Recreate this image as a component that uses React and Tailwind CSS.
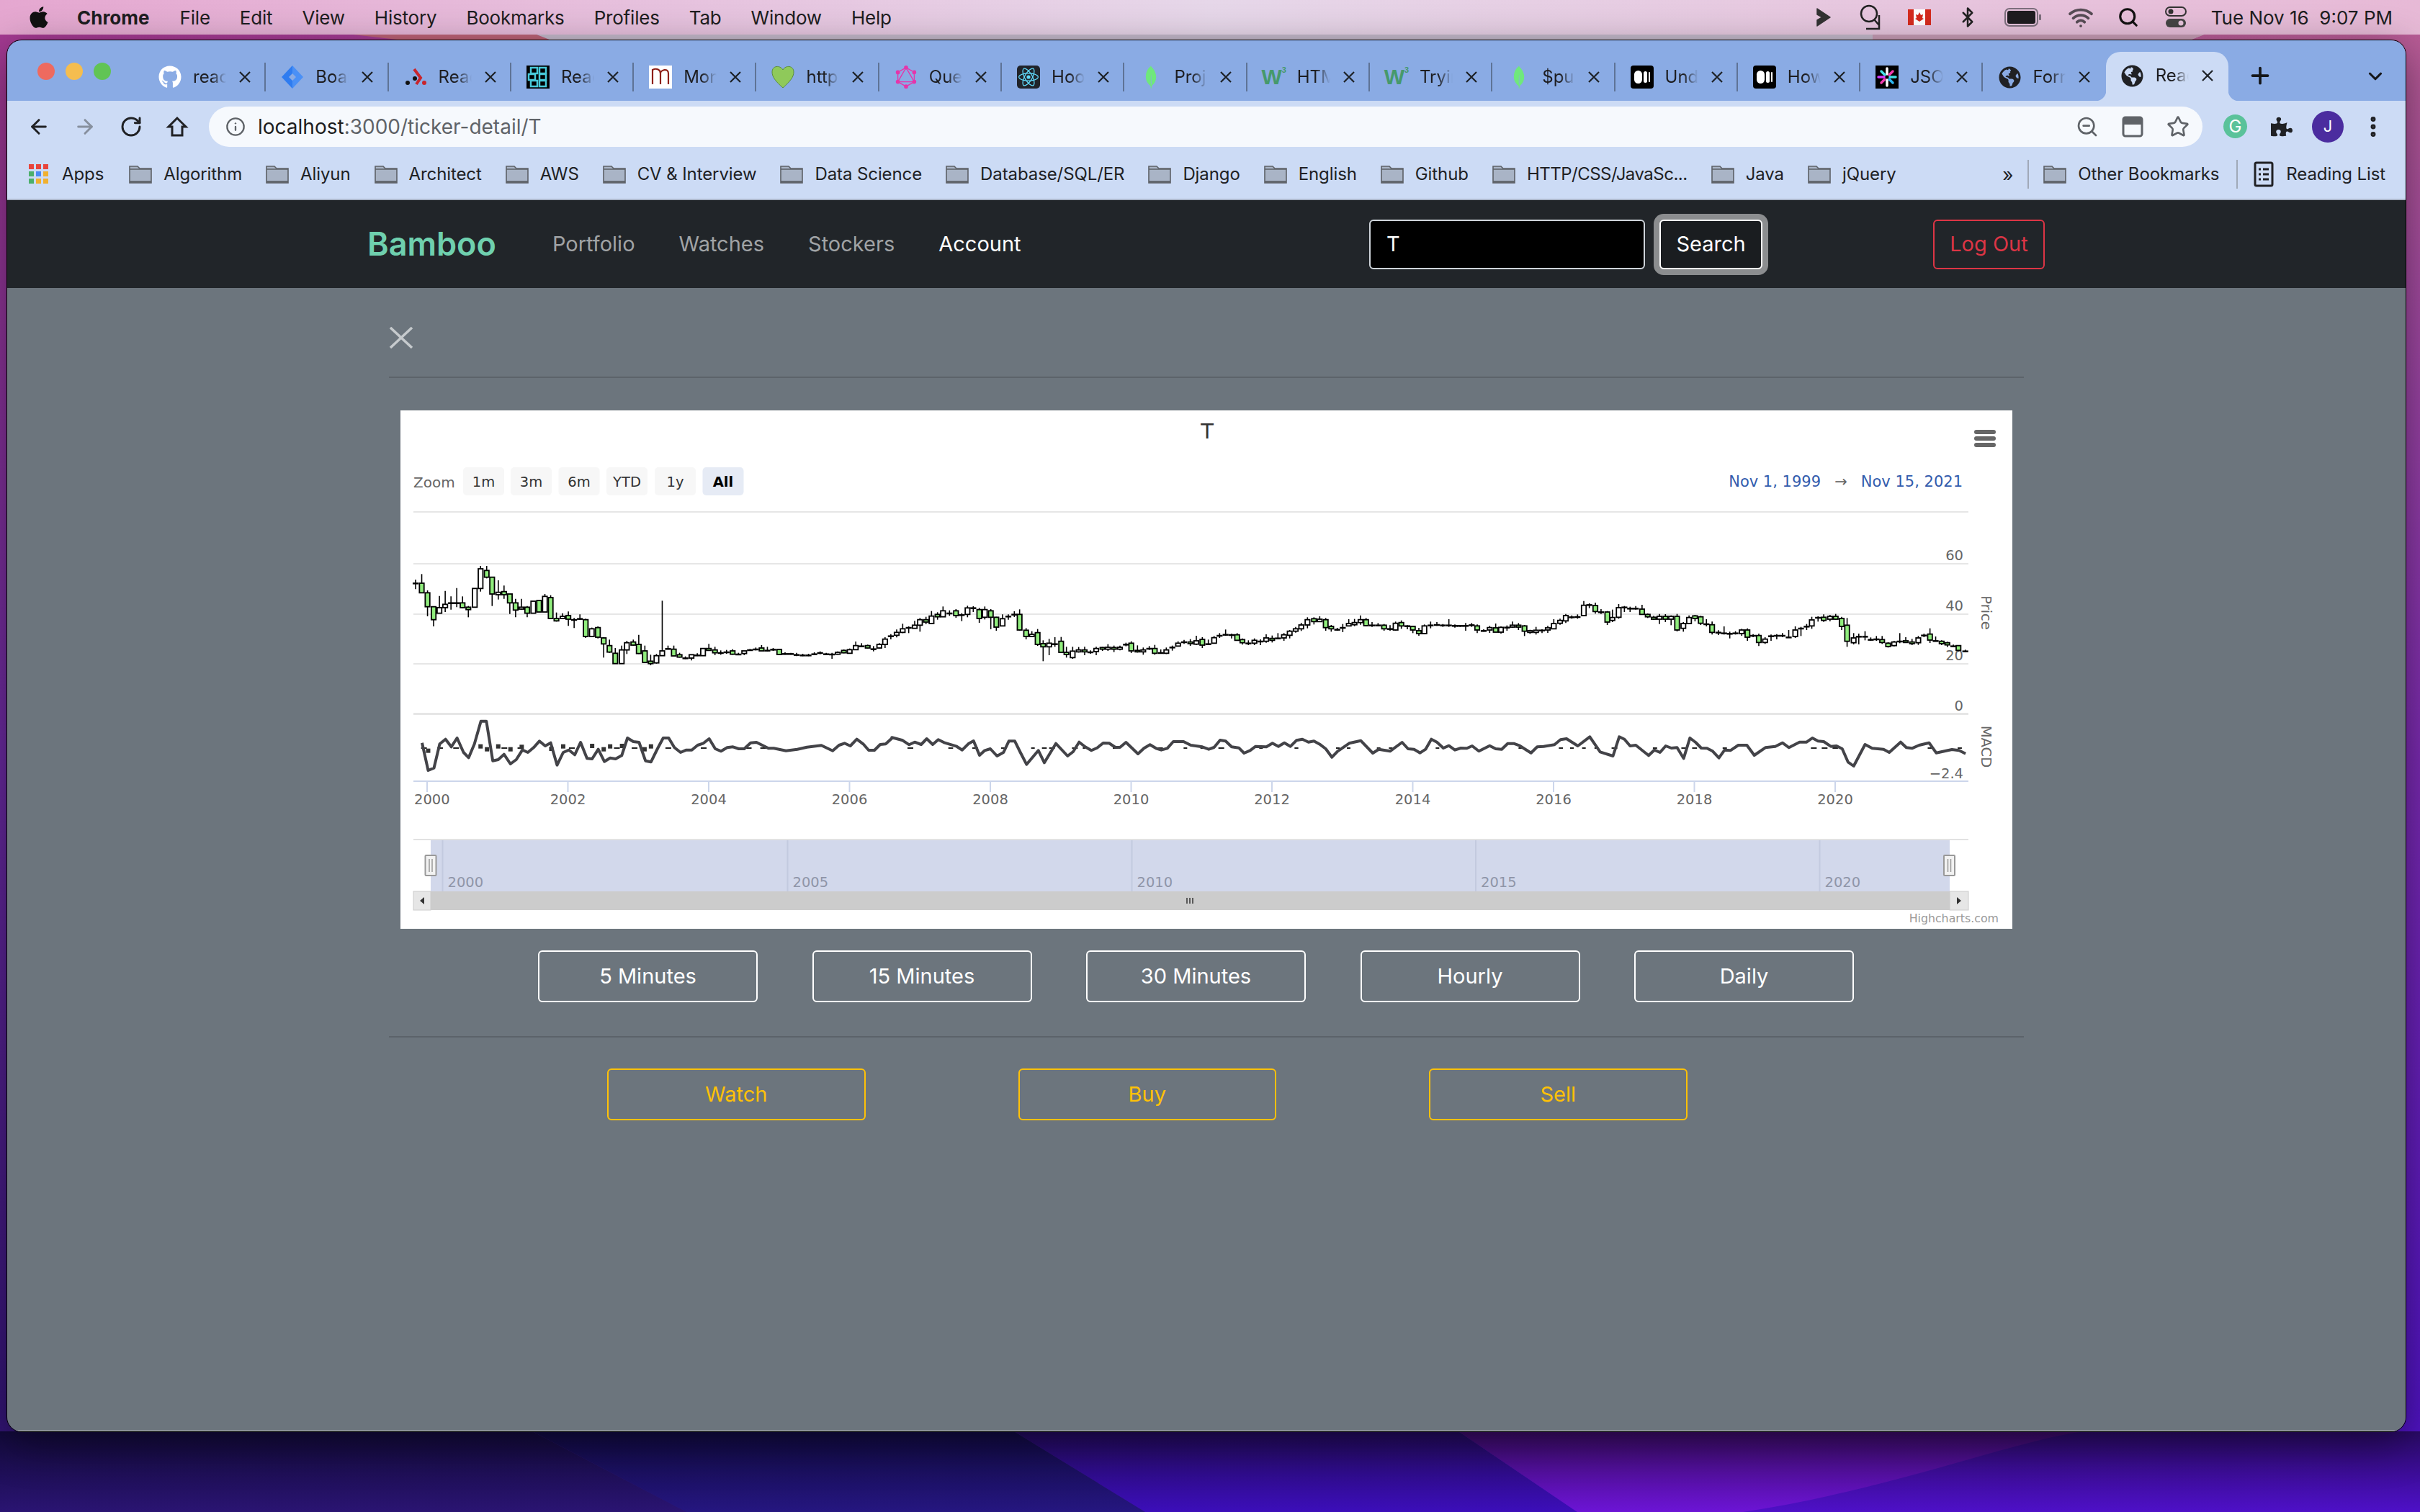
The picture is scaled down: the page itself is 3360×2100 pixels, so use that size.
import { ArrowLeft, ArrowRight, Bluetooth, EllipsisVertical, Info, Plus, RotateCw, Search, Star, Wifi, ZoomOut, ChevronDown } from 'lucide-react'
import { FaApple, FaGithub, FaGlobeAmericas, FaPuzzlePiece } from 'react-icons/fa'
import { SiGraphql, SiMongodb, SiReact } from 'react-icons/si'

const menus = ['File', 'Edit', 'View', 'History', 'Bookmarks', 'Profiles', 'Tab', 'Window', 'Help']

const W3 = () => (
  <span className="flex w-[32px] items-start justify-center font-['Liberation_Sans',sans-serif] text-[30px] leading-none font-bold text-[#46996c]">
    W<span className="text-[11px] leading-none">3</span>
  </span>
)

const Medium = () => (
  <span className="flex h-[32px] w-[32px] items-center justify-center gap-[2px] rounded-[4px] bg-black">
    <span className="h-[18px] w-[11px] rounded-full bg-white" />
    <span className="h-[16px] w-[5px] rounded-full bg-white" />
    <span className="h-[14px] w-[2px] rounded-full bg-white" />
  </span>
)

const Leaf = () => <SiMongodb size={32} color="#6fe87c" />
const Globe = () => <FaGlobeAmericas size={31} color="#202124" />

const tabs = [
  { title: 'react', icon: <FaGithub size={32} color="#fff" /> },
  {
    title: 'Board',
    icon: (
      <svg width="32" height="32" viewBox="0 0 32 32">
        <path d="M16 0L1 16l15 16V21l-5-5 5-5z" fill="#2f7cf0" />
        <path d="M16 0l15 16-15 16V21l5-5-5-5z" fill="#4a90f6" />
      </svg>
    ),
  },
  {
    title: 'React',
    icon: (
      <svg width="32" height="32" viewBox="0 0 32 32">
        <circle cx="5" cy="24" r="3" fill="#111" />
        <circle cx="15" cy="18" r="3" fill="#111" />
        <circle cx="28" cy="24" r="3" fill="#c9252c" />
        <path d="M14 5l9 12-6 9" fill="none" stroke="#c9252c" strokeWidth="4" />
      </svg>
    ),
  },
  {
    title: 'React',
    icon: (
      <svg width="32" height="32" viewBox="0 0 32 32">
        <rect width="32" height="32" fill="#000" />
        <g fill="none" stroke="#47c8d8" strokeWidth="2.5">
          <rect x="6" y="3" width="9" height="8" />
          <rect x="18" y="3" width="9" height="8" />
          <rect x="3" y="12" width="9" height="8" />
          <rect x="18" y="12" width="9" height="8" />
          <rect x="6" y="21" width="9" height="8" />
          <rect x="18" y="21" width="9" height="8" />
        </g>
      </svg>
    ),
  },
  {
    title: 'Mongo',
    icon: (
      <svg width="32" height="32" viewBox="0 0 32 32">
        <rect width="32" height="32" fill="#fff" />
        <path d="M5 26V6c6-3 11 0 11 5v15M16 11c0-5 11-8 11 0v15" fill="none" stroke="#8e1f17" strokeWidth="2.2" />
      </svg>
    ),
  },
  {
    title: 'https',
    icon: (
      <svg width="32" height="32" viewBox="0 0 32 32">
        <path d="M16 31C6 22 1 16 1 9c0-9 11-10 15-3 4-7 15-6 15 3 0 7-5 13-15 22z" fill="#8fc95a" stroke="#5c8f3a" />
      </svg>
    ),
  },
  { title: 'Query', icon: <SiGraphql size={32} color="#e535ab" /> },
  {
    title: 'Hooks',
    icon: (
      <span className="flex h-[32px] w-[32px] items-center justify-center rounded-[5px] bg-[#20232a]">
        <SiReact size={28} color="#61dafb" />
      </span>
    ),
  },
  { title: 'Project', icon: <Leaf /> },
  { title: 'HTML', icon: <W3 /> },
  { title: 'Trying', icon: <W3 /> },
  { title: '$push', icon: <Leaf /> },
  { title: 'Under', icon: <Medium /> },
  { title: 'How', icon: <Medium /> },
  {
    title: 'JSON',
    icon: (
      <svg width="32" height="32" viewBox="0 0 32 32">
        <rect width="32" height="32" fill="#000" />
        <g strokeWidth="3.5" strokeLinecap="round">
          <path d="M16 4v8" stroke="#fff" />
          <path d="M16 20v8" stroke="#fff" />
          <path d="M8 8l5 5" stroke="#42e0e6" />
          <path d="M24 8l-5 5" stroke="#f23bb0" />
          <path d="M4 16h8" stroke="#d63aff" />
          <path d="M20 16h8" stroke="#42e0e6" />
          <path d="M8 24l5-5" stroke="#f23bb0" />
          <path d="M24 24l-5-5" stroke="#2fb6f0" />
        </g>
      </svg>
    ),
  },
  { title: 'Forms', icon: <Globe /> },
]

const bookmarks = ['Algorithm', 'Aliyun', 'Architect', 'AWS', 'CV & Interview', 'Data Science', 'Database/SQL/ER', 'Django', 'English', 'Github', 'HTTP/CSS/JavaSc...', 'Java', 'jQuery']

const TabClose = () => (
  <svg width="18" height="18" viewBox="0 0 18 18" className="shrink-0">
    <path d="M2 2l14 14M16 2L2 16" stroke="#1d2126" strokeWidth="2.2" fill="none" />
  </svg>
)

const Folder = () => (
  <svg width="32" height="26" viewBox="0 0 32 26" className="shrink-0">
    <path d="M1 25V2h11l3 3h16v20z" fill="#a9b4c6" stroke="#5c6066" strokeWidth="1.6" />
    <path d="M1 6h30" stroke="#5c6066" strokeWidth="1.6" />
    <path d="M1 23.5h30" stroke="#5c6066" strokeWidth="2.4" />
  </svg>
)

const AppsGrid = () => (
  <svg width="28" height="28" viewBox="0 0 28 28" className="shrink-0">
    {[
      [0, 0, '#e8453c'], [10, 0, '#e8453c'], [20, 0, '#e8453c'],
      [0, 10, '#4caf6a'], [10, 10, '#4a8af4'], [20, 10, '#f0b02f'],
      [0, 20, '#4caf6a'], [10, 20, '#f0b02f'], [20, 20, '#f0b02f'],
    ].map(([x, y, c]) => (
      <rect key={x + '-' + y} x={x} y={y} width="7" height="7" fill={c} />
    ))}
  </svg>
)

// candle rows: [x, top, bottom, green, wickTop, wickBottom], read off the zoomed crops
const rowsA = [
  [83, 750, 752, 0, 735, 775], [102, 750, 790, 1, 712, 790], [120, 790, 848, 1, 780, 888], [139, 848, 902, 1, 848, 930],
  [157, 852, 875, 0, 803, 875], [175, 838, 852, 0, 782, 870], [193, 832, 834, 0, 805, 860], [211, 832, 834, 0, 770, 850],
  [229, 832, 852, 1, 805, 855], [247, 850, 860, 1, 845, 892], [267, 772, 850, 0, 772, 852], [285, 690, 772, 0, 678, 785],
  [304, 697, 725, 1, 678, 730], [321, 725, 795, 1, 725, 845], [340, 788, 798, 0, 738, 818], [358, 785, 798, 1, 760, 815],
  [376, 795, 832, 1, 795, 878], [394, 832, 862, 1, 815, 892], [412, 850, 858, 0, 815, 860], [430, 850, 875, 1, 845, 892],
  [449, 825, 875, 0, 825, 875], [467, 822, 870, 1, 822, 870], [485, 805, 870, 0, 795, 870], [503, 810, 897, 1, 800, 897],
  [521, 897, 907, 1, 872, 910], [540, 888, 897, 0, 875, 900], [558, 885, 900, 1, 868, 928], [576, 902, 904, 0, 895, 937],
  [594, 898, 900, 0, 880, 902], [612, 902, 972, 1, 898, 978], [631, 940, 972, 0, 935, 975], [650, 935, 975, 1, 930, 980],
  [668, 978, 1003, 1, 975, 1060], [686, 1010, 1037, 1, 985, 1040], [704, 1042, 1085, 1, 1020, 1085], [724, 1028, 1085, 0, 1010, 1085],
  [740, 998, 1028, 0, 990, 1045], [760, 995, 1008, 1, 985, 1010], [777, 1005, 1043, 1, 965, 1045], [796, 1032, 1080, 1, 1010, 1080],
  [814, 1075, 1085, 1, 1048, 1092], [832, 1052, 1082, 0, 1045, 1085], [850, 1032, 1052, 0, 823, 1052], [868, 1023, 1025, 0, 1010, 1025],
  [886, 1025, 1053, 1, 1010, 1053], [904, 1048, 1058, 1, 1040, 1060], [922, 1062, 1064, 0, 1055, 1066], [941, 1048, 1062, 0, 1048, 1072],
  [959, 1050, 1052, 0, 1042, 1054], [977, 1022, 1052, 0, 1022, 1052], [995, 1022, 1030, 1, 1003, 1030], [1014, 1028, 1040, 1, 1015, 1050],
  [1032, 1040, 1042, 0, 1030, 1048], [1050, 1037, 1039, 0, 1028, 1044], [1069, 1032, 1046, 1, 1025, 1048], [1087, 1046, 1048, 0, 1040, 1050],
  [1105, 1032, 1043, 0, 1032, 1050], [1123, 1028, 1030, 0, 1024, 1032], [1141, 1025, 1027, 0, 1018, 1030], [1159, 1020, 1032, 1, 1008, 1032],
  [1177, 1030, 1032, 0, 1015, 1034], [1195, 1026, 1028, 0, 1020, 1032], [1214, 1026, 1047, 1, 1024, 1047], [1232, 1044, 1046, 0, 1038, 1048],
  [1250, 1044, 1046, 0, 1040, 1048], [1268, 1048, 1050, 0, 1040, 1054], [1287, 1050, 1052, 0, 1044, 1054], [1305, 1050, 1052, 0, 1044, 1054],
  [1323, 1045, 1047, 0, 1038, 1050], [1341, 1040, 1042, 0, 1034, 1046], [1360, 1045, 1047, 0, 1040, 1050], [1378, 1046, 1048, 0, 1040, 1065],
  [1396, 1038, 1046, 0, 1034, 1048], [1415, 1030, 1040, 1, 1026, 1042], [1433, 1027, 1042, 0, 1022, 1042], [1452, 1010, 1027, 0, 993, 1027],
  [1470, 1012, 1014, 0, 1000, 1016], [1489, 1010, 1020, 1, 1006, 1022], [1507, 1024, 1026, 0, 1012, 1034], [1525, 1005, 1020, 0, 1000, 1022],
  [1543, 983, 1005, 0, 975, 1020], [1561, 970, 972, 0, 962, 984],
]

const rowsB = [
  [45, 235, 247], [70, 220, 235], [95, 215, 217, 0, 210, 238], [120, 205, 218], [142, 182, 205, 0, 175, 232], [167, 182, 192, 1], [190, 167, 198],
  [215, 160, 170, 1], [238, 145, 170], [265, 155, 157, 0, 143, 166], [292, 145, 165, 1, 138], [316, 162, 164, 0, 155, 188], [340, 133, 160],
  [364, 133, 135, 0, 126, 150], [389, 140, 177, 1, 133, 195], [412, 140, 172, 0, 127], [437, 145, 172, 1, 138, 222], [460, 172, 213, 1, 170, 228],
  [486, 178, 208], [510, 168, 170, 0, 160, 182], [535, 160, 162, 0, 147], [557, 160, 225, 1], [584, 226, 252, 1], [608, 243, 252, 0, 230], [632, 236, 285, 1],
  [655, 282, 295, 1, 268, 355], [680, 280, 295, 0, 262, 330], [704, 283, 285, 0, 255, 295], [730, 272, 318, 1], [752, 318, 327, 1, 295, 340],
  [778, 313, 340, 0, 295, 345], [803, 308, 316, 0, 296], [828, 308, 316, 1, 295, 330], [852, 317, 319, 0, 310, 324], [876, 302, 315, 0, 295, 330],
  [902, 298, 305, 1, 296, 312], [925, 297, 305, 0, 284, 312], [950, 298, 305, 1, 290], [975, 297, 305, 0, 290, 310], [1000, 285, 287, 0, 278],
  [1022, 280, 312, 1, 272], [1048, 310, 316, 1], [1072, 308, 316, 0, 298], [1097, 302, 304, 0, 292, 308], [1120, 302, 322, 1], [1145, 320, 322, 0, 306, 324],
  [1168, 308, 322, 0, 298], [1193, 297, 299, 0, 290], [1217, 280, 292, 0, 272], [1242, 275, 277, 0, 266], [1268, 275, 282, 1], [1293, 270, 284], [1318, 264, 288, 1],
  [1343, 283, 285], [1367, 257, 280, 0, 250, 282], [1390, 248, 250, 0, 238, 258], [1415, 244, 246], [1440, 245, 247, 0, 240, 260], [1463, 245, 268, 1, 238],
]

const rowsC = [
  [15, 265, 278, 1, 260, 286], [40, 280, 282, 0, 268, 288], [65, 268, 280, 0, 260, 288], [90, 272, 274, 0, 264, 288], [114, 258, 272], [139, 260, 268, 1],
  [163, 259, 261], [188, 245, 258, 0, 238], [212, 230, 247, 0, 225, 260], [237, 220, 230, 0, 212], [260, 204, 220, 0, 195], [286, 182, 204, 0, 172, 218],
  [313, 178, 190, 1, 172], [337, 180, 190, 0, 168], [362, 182, 215, 1, 175, 228], [385, 210, 220, 1, 204, 232], [410, 223, 225, 0, 216, 228], [433, 215, 217, 0, 200, 234],
  [458, 198, 208], [482, 194, 203], [507, 182, 194, 0, 164], [530, 182, 207, 1, 175], [555, 205, 207, 0, 192, 212], [580, 205, 207, 0, 196, 210],
  [605, 205, 220, 1, 200, 228], [630, 220, 222, 0, 205, 228], [653, 197, 225, 0, 190], [677, 194, 208, 1], [702, 208, 210, 0, 205, 222], [725, 210, 225, 1, 208, 238],
  [750, 228, 240, 1], [773, 208, 240, 0, 202], [799, 205, 207, 0, 190, 218], [825, 203, 205, 0, 192, 208], [850, 205, 207, 0, 200, 212], [875, 205, 207, 0, 180, 212],
  [900, 207, 209, 0, 202, 215], [922, 207, 209, 0, 204, 212], [945, 207, 209, 0, 196, 228], [970, 204, 206, 0, 196, 212], [993, 208, 225, 1, 202, 238], [1020, 228, 230, 0, 222, 232],
  [1045, 215, 225, 0, 208], [1070, 216, 234, 1], [1092, 214, 234, 0, 210], [1117, 214, 216, 0, 206, 228], [1140, 205, 213, 0, 190], [1165, 205, 213, 1, 196], [1190, 208, 230, 1, 204, 250],
  [1213, 228, 235, 0, 224], [1238, 226, 235, 0, 212], [1263, 226, 228, 0, 222, 238], [1287, 216, 225, 0, 208], [1312, 198, 220], [1338, 185, 197, 0, 178], [1362, 165, 187, 0, 158],
  [1387, 171, 173, 0, 164, 178], [1411, 170, 172, 0, 160, 178], [1437, 122, 165], [1460, 120, 122, 0, 114, 134],
]

const rowsD = [
  [38, 843, 868, 1], [58, 870, 872, 0, 858, 878], [80, 870, 912, 1, 866], [98, 893, 905, 0, 860, 912], [120, 852, 892], [140, 850, 852, 0, 845, 870], [160, 855, 857, 0, 848, 870],
  [180, 855, 857, 0, 845, 860], [202, 858, 880, 1], [222, 880, 890, 1, 876, 895], [243, 892, 900, 1, 886, 903], [263, 888, 900, 0, 878, 920], [284, 888, 900, 1],
  [304, 888, 900, 0, 884, 925], [325, 888, 945, 1, 878], [347, 918, 938, 0, 912, 952], [367, 893, 918, 0, 884], [388, 886, 897, 1, 882], [408, 890, 917, 1, 886, 924],
  [428, 920, 922, 0, 900, 930], [448, 923, 955, 1, 910], [470, 955, 957, 0, 946, 966], [490, 958, 960, 0, 930, 964], [510, 960, 962, 0, 952, 980], [530, 958, 960, 0, 950, 964],
  [552, 945, 960, 0, 940], [572, 945, 975, 1, 938, 990], [592, 968, 970, 0, 962, 975], [612, 968, 997, 1, 960, 1012], [634, 983, 997, 0, 975], [655, 970, 972, 0, 964, 990],
  [675, 968, 970, 0, 962, 984], [695, 968, 970, 0, 958, 975], [717, 975, 977, 0, 945, 978], [740, 945, 972], [760, 938, 940, 0, 932, 970], [780, 930, 932, 0, 920, 945],
  [798, 903, 928, 0, 890], [820, 893, 895, 0, 888, 910], [840, 892, 905, 1, 880], [862, 888, 900, 0, 882], [882, 888, 900, 1, 878], [903, 897, 930, 1, 890, 945], [922, 925, 992, 1, 895, 1015],
  [945, 978, 998, 0, 958, 1005], [963, 972, 974, 0, 960, 1005], [985, 972, 974, 0, 950, 988], [1005, 985, 987, 0, 976, 990], [1025, 983, 985, 0, 970, 990], [1045, 985, 997, 1],
  [1066, 1000, 1014, 1, 996, 1018], [1087, 995, 1010, 0, 990], [1107, 992, 994, 0, 958, 1000], [1128, 990, 997, 1, 975], [1150, 995, 1002, 1, 982], [1172, 978, 998, 0, 970],
  [1192, 967, 969, 0, 960, 975], [1213, 962, 987, 1, 938], [1233, 990, 992], [1254, 992, 1002, 1, 988], [1274, 998, 1007, 1, 994], [1295, 1012, 1014, 0, 1006, 1016], [1313, 1010, 1030, 1, 1008, 1034], [1337, 1033, 1035, 0, 1027, 1038],
]

const mapRows = (rows, fx, fy) =>
  rows.map(([x, t, b, g, wt, wb], i) => {
    const top = fy(t)
    const bot = fy(b)
    return {
      x: fx(x),
      top,
      bot,
      green: g === 1,
      wt: wt === undefined ? top - [4, 7, 3, 6, 5][i % 5] : fy(wt),
      wb: wb === undefined ? bot + [3, 1, 4, 0, 2][i % 5] : fy(wb),
    }
  })

const candles = [
  ...mapRows(rowsA, (z) => z / 2.24 - 16, (z) => z / 3 - 10),
  ...mapRows(rowsB, (z) => 674 + z / 3, (z) => 230 + z / 3),
  ...mapRows(rowsC, (z) => 1164 + z / 3, (z) => 230 + z / 3),
  ...mapRows(rowsD, (z) => 1644 + z / 2.529, (z) => z / 3 - 10),
]

const macdA = [[103,305],[122,420],[140,410],[158,310],[176,290],[194,322],[212,285],[232,345],[248,367],[266,310],[286,215],[303,215],[323,380],[340,375],[358,353],[378,393],[396,375],[415,335],[432,345],[450,325],[468,298],[486,318],[503,305],[523,398],[542,345],[560,335],[578,355],[596,303],[616,370],[632,372],[651,332],[670,383],[688,368],[705,372],[724,358],[742,285],[760,300],[778,303],[798,380],[815,385],[835,330],[853,285],[870,285],[888,325],[907,345],[925,335],[942,335],[960,315],[978,307],[996,288],[1015,330],[1033,340],[1052,325],[1070,322],[1088,330],[1105,330],[1125,305],[1143,303],[1180,328],[1197,328],[1235,338],[1270,332],[1300,323],[1345,316],[1380,338],[1400,315],[1417,307],[1435,318],[1455,290],[1475,310],[1492,336],[1510,336],[1528,312],[1545,310],[1565,285]]
const macdB = [[25,673],[70,685],[97,703],[120,692],[147,702],[170,678],[195,702],[218,682],[245,695],[295,710],[318,725],[345,698],[365,687],[390,747],[412,727],[435,720],[463,750],[490,735],[512,688],[537,688],[560,735],[586,785],[635,727],[660,778],[708,698],[757,750],[780,732],[805,692],[830,712],[856,727],[880,716],[905,696],[930,697],[955,713],[975,714],[1000,693],[1025,717],[1050,741],[1075,718],[1100,703],[1125,718],[1147,725],[1172,718],[1197,690],[1240,690],[1270,705],[1318,712],[1345,722],[1367,714],[1392,684],[1415,688],[1440,712],[1470,716]]
const macdC = [[22,738],[47,727],[70,710],[115,712],[140,697],[165,710],[190,695],[215,710],[240,685],[265,680],[290,692],[313,688],[340,703],[362,720],[388,755],[412,730],[460,697],[508,686],[558,738],[583,722],[630,730],[680,693],[705,720],[730,722],[755,737],[778,722],[802,680],[825,692],[852,717],[875,707],[900,725],[925,717],[950,718],[972,708],[1000,730],[1045,707],[1070,720],[1095,722],[1120,698],[1145,698],[1170,707],[1217,737],[1243,712],[1270,710],[1315,703],[1340,682],[1365,678],[1412,708],[1462,670]]
const macdD = [[55,343],[100,360],[122,280],[140,290],[160,318],[180,315],[225,358],[245,335],[265,345],[285,318],[305,327],[325,325],[348,370],[370,285],[390,303],[410,327],[430,328],[450,340],[472,368],[492,335],[512,337],[540,315],[570,315],[596,357],[635,325],[670,320],[695,305],[718,325],[755,302],[780,302],[800,285],[820,298],[840,300],[865,320],[885,318],[905,330],[925,385],[945,402],[985,312],[1010,328],[1050,332],[1070,345],[1110,302],[1130,325],[1150,328],[1175,315],[1210,305],[1235,347],[1290,333],[1315,337],[1338,350]]

const macdLine = [
  ...macdA.map(([x, y]) => [x / 2.24 - 16, 360 + y / 3]),
  ...macdB.map(([x, y]) => [674 + x / 3, 230 + y / 3]),
  ...macdC.map(([x, y]) => [1164 + x / 3, 230 + y / 3]),
  ...macdD.map(([x, y]) => [1644 + x / 2.529, 360 + y / 3]),
]
  .map(([x, y]) => x.toFixed(1) + ',' + y.toFixed(1))
  .join(' ')

// bits of the dashed signal line that show through
const dashes = [
  ...[[100,130],[150,175],[200,225],[350,375],[400,425],[560,590],[700,730],[755,780],[860,885],[970,990],[1110,1135],[1155,1175]].map(([a, b]) => [a / 2.24 - 16, b / 2.24 - 16]),
  ...[[90,130],[260,280],[360,400],[480,500],[605,620],[650,670],[680,720],[775,830],[945,975],[1130,1160],[1240,1255],[1310,1325],[1385,1425]].map(([a, b]) => [674 + a / 3, 674 + b / 3]),
  ...[[85,100],[232,248],[405,420],[450,465],[575,590],[625,640],[820,835],[920,935],[1165,1180],[1333,1350],[1380,1395],[1430,1445]].map(([a, b]) => [1164 + a / 3, 1164 + b / 3]),
  ...[[35,50],[95,120],[240,255],[340,395],[485,500],[795,890],[1205,1225],[1310,1325]].map(([a, b]) => [1644 + a / 2.529, 1644 + b / 2.529]),
]

const blocks = [[122,338],[285,320],[305,332],[340,320],[378,332],[413,322],[505,330],[542,320],[632,318],[668,332],[688,320],[725,318],[795,332],[815,320]]

const rangeBtns = [
  ['1m', 87],
  ['3m', 153],
  ['6m', 219.5],
  ['YTD', 286],
  ['1y', 353],
]

const yearTicks = [2002, 2004, 2006, 2008, 2010, 2012, 2014, 2016, 2018, 2020]
const navYears = [
  [2000, 58.5],
  [2005, 537.5],
  [2010, 1015.5],
  [2015, 1493],
  [2020, 1970.5],
]

const StockChart = () => (
  <svg
    width="2238"
    height="720"
    viewBox="0 0 2238 720"
    className="block bg-white font-['DejaVu_Sans',sans-serif]"
  >
    <text x="1120" y="39" textAnchor="middle" fontSize="29" fill="#333">T</text>
    <g fill="#666">
      <rect x="2185" y="27" width="30" height="6" rx="3" />
      <rect x="2185" y="36" width="30" height="6" rx="3" />
      <rect x="2185" y="45" width="30" height="6" rx="3" />
    </g>

    <text x="18" y="107" fontSize="20" fill="#666">Zoom</text>
    {rangeBtns.map(([label, x]) => (
      <g key={label}>
        <rect x={x} y="79" width="57" height="39" rx="5" fill="#f7f7f7" />
        <text x={x + 28.5} y="106" textAnchor="middle" fontSize="19.5" fill="#333">{label}</text>
      </g>
    ))}
    <rect x="419.5" y="79" width="57" height="39" rx="5" fill="#e6ebf5" />
    <text x="448" y="106" textAnchor="middle" fontSize="19.5" fontWeight="700" fill="#000">All</text>

    <text x="2169" y="106" textAnchor="end" fontSize="21" fill="#335cad">Nov 15, 2021</text>
    <text x="2000" y="106" textAnchor="middle" fontSize="21" fill="#666">→</text>
    <text x="1972" y="106" textAnchor="end" fontSize="21" fill="#335cad">Nov 1, 1999</text>

    <g stroke="#e6e6e6" strokeWidth="2">
      <path d="M18 141H2177M18 213H2177M18 283H2177M18 352H2177" fill="none" />
    </g>
    <rect x="18" y="420" width="2159" height="3" fill="#e6e6e6" />
    <rect x="18" y="514" width="2159" height="2" fill="#ccd6eb" />

    <g fontSize="19.5" fill="#666" textAnchor="end">
      <text x="2170" y="208">60</text>
      <text x="2170" y="278">40</text>
      <text x="2170" y="347">20</text>
      <text x="2170" y="417">0</text>
      <text x="2170" y="511">−2.4</text>
    </g>
    <text transform="translate(2195 281) rotate(90)" textAnchor="middle" fontSize="19.5" fill="#666">Price</text>
    <text transform="translate(2195 467) rotate(90)" textAnchor="middle" fontSize="19.5" fill="#666">MACD</text>

    {candles.map((c, i) => (
      <g key={i}>
        <line x1={c.x} x2={c.x} y1={c.wt} y2={c.wb} stroke="#000" strokeWidth="1.6" />
        <rect
          x={c.x - 3.2}
          y={c.top}
          width="6.4"
          height={Math.max(c.bot - c.top, 0.6)}
          fill={c.green ? '#90ed7d' : '#fff'}
          stroke="#000"
          strokeWidth="1.8"
        />
      </g>
    ))}

    {dashes.map(([a, b], i) => (
      <line key={i} x1={a} x2={b} y1="469" y2="469" stroke="#222" strokeWidth="2" strokeDasharray="8 7" />
    ))}
    {blocks.map(([x, y]) => (
      <rect key={x} x={x / 2.24 - 19} y={357 + y / 3} width="6" height="6" fill="#333" />
    ))}
    <polyline points={macdLine} fill="none" stroke="#434348" strokeWidth="4" strokeLinejoin="round" />

    <line x1="37" x2="37" y1="516" y2="530" stroke="#ccd6eb" strokeWidth="2" />
    <text x="19" y="547" fontSize="19.5" fill="#666">2000</text>
    {yearTicks.map((y) => {
      const x = 37 + 97.75 * (y - 2000)
      return (
        <g key={y}>
          <line x1={x} x2={x} y1="516" y2="530" stroke="#ccd6eb" strokeWidth="2" />
          <text x={x} y="547" textAnchor="middle" fontSize="19.5" fill="#666">{y}</text>
        </g>
      )
    })}

    <rect x="42" y="596" width="2109" height="72" fill="#d2d8eb" />
    <line x1="18" x2="2177" y1="596" y2="596" stroke="#e2e2e2" strokeWidth="2" />
    {navYears.map(([y, x]) => (
      <g key={y}>
        <line x1={x} x2={x} y1="597" y2="668" stroke="#c3cadf" strokeWidth="2" />
        <text x={x + 7} y="662" fontSize="19.5" fill="#8f95a8">{y}</text>
      </g>
    ))}
    {[34.5, 2143].map((x) => (
      <g key={x}>
        <rect x={x} y="618" width="15" height="28" rx="1" fill="#f2f2f2" stroke="#999" strokeWidth="2" />
        <path d={`M${x + 5.5} 623v18M${x + 9.5} 623v18`} stroke="#999" strokeWidth="1.5" fill="none" />
      </g>
    ))}

    <rect x="18" y="668" width="2159" height="26" fill="#ccc" />
    <rect x="18" y="668" width="24" height="26" fill="#e6e6e6" stroke="#ccc" />
    <rect x="2151" y="668" width="26" height="26" fill="#e6e6e6" stroke="#ccc" />
    <path d="M33 676v10l-6-5zM2161 676v10l6-5z" fill="#333" />
    <path d="M1092 677v8M1096 677v8M1100 677v8" stroke="#333" strokeWidth="1.5" fill="none" />
    <text x="2219" y="711" textAnchor="end" fontSize="15.8" fill="#999">Highcharts.com</text>
  </svg>
)

const intervals = ['5 Minutes', '15 Minutes', '30 Minutes', 'Hourly', 'Daily']
const actions = ['Watch', 'Buy', 'Sell']

export default function App() {
  return (
    <div className="relative h-[2100px] w-[3360px] overflow-hidden font-['Inter',sans-serif] text-[#1d1d20]">
      {/* wallpaper */}
      <svg className="absolute inset-0" width="3360" height="2100" viewBox="0 0 3360 2100">
        <defs>
          <linearGradient id="wall" x1="0" y1="0" x2="0" y2="1">
            <stop offset="0" stopColor="#a83b92" />
            <stop offset="0.5" stopColor="#6a2aa0" />
            <stop offset="1" stopColor="#2c1270" />
          </linearGradient>
          <linearGradient id="wallR" x1="0" y1="0" x2="0" y2="1">
            <stop offset="0" stopColor="#bb5e94" />
            <stop offset="0.5" stopColor="#7a2ab0" />
            <stop offset="1" stopColor="#4a10c4" />
          </linearGradient>
          <linearGradient id="b1" x1="0" y1="1988" x2="0" y2="2100" gradientUnits="userSpaceOnUse">
            <stop offset="0" stopColor="#130a3c" />
            <stop offset="1" stopColor="#2a1472" />
          </linearGradient>
          <linearGradient id="b2" x1="0" y1="1988" x2="0" y2="2100" gradientUnits="userSpaceOnUse">
            <stop offset="0" stopColor="#110a42" />
            <stop offset="1" stopColor="#251680" />
          </linearGradient>
          <linearGradient id="b3" x1="0" y1="1988" x2="0" y2="2100" gradientUnits="userSpaceOnUse">
            <stop offset="0" stopColor="#220a5c" />
            <stop offset="1" stopColor="#3c0eba" />
          </linearGradient>
          <linearGradient id="b4" x1="0" y1="1988" x2="0" y2="2100" gradientUnits="userSpaceOnUse">
            <stop offset="0" stopColor="#3a0b66" />
            <stop offset="1" stopColor="#6c14d6" />
          </linearGradient>
          <linearGradient id="b5" x1="0" y1="1988" x2="0" y2="2100" gradientUnits="userSpaceOnUse">
            <stop offset="0" stopColor="#2a0a66" />
            <stop offset="1" stopColor="#4e10c8" />
          </linearGradient>
        </defs>
        <rect width="1680" height="2100" fill="url(#wall)" />
        <rect x="1680" width="1680" height="2100" fill="url(#wallR)" />
        <path d="M490 48L560 56H765L745 48z" fill="#bd6276" />
        <path d="M745 48L765 56H3040L3060 48z" fill="#c4b9cb" />
        <path d="M2600 48V56H3040L3060 48z" fill="#c79cb5" />
        <path d="M0 1988H739L953 2100H0z" fill="url(#b1)" />
        <path d="M739 1988L953 2100H1590L1408 1988z" fill="url(#b2)" />
        <path d="M1408 1988L1590 2100H2190L2025 1988z" fill="url(#b3)" />
        <path d="M2025 1988L2190 2100H3360V1988z" fill="url(#b5)" />
        <path d="M2025 1988L2190 2100H2420C2620 2070 2800 2000 2893 1988z" fill="url(#b4)" />
      </svg>

      {/* mac menu bar */}
      <header className="relative flex h-[48px] items-center bg-gradient-to-r from-[#e5a7d0] via-[#e6d7e9] to-[#e7b9d6] text-[26px]">
        <FaApple size={34} color="#111" className="ml-[37px]" />
        <span className="ml-[36px] font-bold">Chrome</span>
        <nav className="ml-[42px] flex gap-[41px] tracking-[-0.2px]">
          {menus.map((m) => (
            <span key={m}>{m}</span>
          ))}
        </nav>
        <div className="ml-auto flex items-center gap-[36px] pr-[38px]">
          <svg width="26" height="28" viewBox="0 0 26 28">
            <path d="M4 2l18 12L4 26v-8l7-4-7-4z" fill="#333" stroke="#333" strokeWidth="1.5" strokeLinejoin="round" />
          </svg>
          <svg width="32" height="38" viewBox="0 0 32 38" fill="none" stroke="#222" strokeWidth="2.5">
            <circle cx="14" cy="14" r="11" />
            <path d="M21 22l7 8M28 16v19H10" />
          </svg>
          <svg width="32" height="22" viewBox="0 0 32 22">
            <rect width="32" height="22" fill="#fff" />
            <rect width="8" height="22" fill="#d52b1e" />
            <rect x="24" width="8" height="22" fill="#d52b1e" />
            <path d="M16 4l2 4 3-1-1 5 2 1-6 4-6-4 2-1-1-5 3 1z" fill="#d52b1e" />
          </svg>
          <Bluetooth size={30} color="#222" strokeWidth={2} />
          <svg width="52" height="26" viewBox="0 0 52 26">
            <rect x="1" y="1" width="45" height="24" rx="6" fill="none" stroke="#7d6f7d" strokeWidth="2" />
            <rect x="4" y="4" width="39" height="18" rx="3" fill="#1f1c20" />
            <rect x="48" y="9" width="3" height="8" rx="1" fill="#7d6f7d" />
          </svg>
          <Wifi size={36} color="#574c55" strokeWidth={2.5} className="mr-[-3px]" />
          <Search size={30} color="#111" strokeWidth={2.5} />
          <svg width="30" height="30" viewBox="0 0 30 30">
            <rect x="1" y="1" width="28" height="12" rx="6" fill="none" stroke="#333" strokeWidth="2" />
            <circle cx="8" cy="7" r="3.5" fill="#333" />
            <rect x="1" y="17" width="28" height="12" rx="6" fill="#444" />
            <circle cx="22" cy="23" r="3.5" fill="#e7c4dc" />
          </svg>
          <span className="ml-[-2px] whitespace-pre">Tue Nov 16  9:07 PM</span>
        </div>
      </header>

      {/* browser window */}
      <div className="relative mt-[8px] ml-[10px] flex h-[1932px] w-[3330px] flex-col overflow-hidden rounded-[20px] shadow-[0_0_0_1px_#000,0_16px_60px_rgba(0,0,0,0.45)]">
        {/* tab strip */}
        <div className="flex h-[84px] shrink-0 items-end bg-[#8aabe4] text-[24px]">
          <div className="mb-[29px] ml-[42px] flex gap-[15px]">
            <span className="h-[24px] w-[24px] rounded-full bg-[#ee6a5f]" />
            <span className="h-[24px] w-[24px] rounded-full bg-[#f5bd4f]" />
            <span className="h-[24px] w-[24px] rounded-full bg-[#61c454]" />
          </div>
          <div className="ml-[45px] flex items-end">
            {tabs.map((t, i) => (
              <div
                key={i}
                className={
                  i === tabs.length - 1
                    ? 'mb-[13px] flex h-[40px] w-[170.3px] items-center pl-[21px]'
                    : 'mb-[13px] flex h-[40px] w-[170.3px] items-center border-r-2 border-[#5e7396] pl-[21px]'
                }
              >
                <span className="flex w-[32px] shrink-0 items-center justify-center">{t.icon}</span>
                <span className="ml-[16px] w-[46px] overflow-hidden whitespace-nowrap [mask-image:linear-gradient(to_right,black_55%,transparent)]">
                  {t.title}
                </span>
                <span className="ml-[17px] flex"><TabClose /></span>
              </div>
            ))}
            <div className="relative flex h-[68px] w-[170px] items-center rounded-t-[20px] bg-[#ccdbf5] pb-[2px] pl-[21px]">
              <span className="absolute bottom-0 left-[-15px] h-[15px] w-[15px] bg-[radial-gradient(circle_at_0_0,#8aabe4_15px,#ccdbf5_16px)]" />
              <span className="absolute right-[-15px] bottom-0 h-[15px] w-[15px] bg-[radial-gradient(circle_at_100%_0,#8aabe4_15px,#ccdbf5_16px)]" />
              <span className="flex w-[32px] shrink-0 items-center justify-center"><Globe /></span>
              <span className="ml-[16px] w-[46px] overflow-hidden whitespace-nowrap [mask-image:linear-gradient(to_right,black_55%,transparent)]">
                React
              </span>
              <span className="ml-[17px] flex"><TabClose /></span>
            </div>
          </div>
          <Plus size={36} color="#15171a" strokeWidth={2.5} className="mb-[17px] ml-[26px]" />
          <ChevronDown size={30} color="#15171a" strokeWidth={2.5} className="mb-[19px] ml-[127px]" />
        </div>

        {/* toolbar */}
        <div className="flex h-[72px] shrink-0 items-center bg-[#ccdbf5] pb-[1px] pl-[28px]">
          <div className="flex items-center gap-[32px]">
            <ArrowLeft size={32} color="#202124" strokeWidth={2.2} />
            <ArrowRight size={32} color="#87909e" strokeWidth={2.2} />
            <RotateCw size={32} color="#202124" strokeWidth={2.2} />
            <svg width="32" height="32" viewBox="0 0 32 32" fill="none" stroke="#202124" strokeWidth="3">
              <path d="M16 4L4 16h5v12h14V16h5z" strokeLinejoin="miter" />
            </svg>
          </div>
          <div className="ml-[28px] flex h-[56px] w-[2768px] items-center rounded-[28px] bg-[#f6f9fd] pr-[18px] pl-[23px]">
            <Info size={28} color="#5f6368" strokeWidth={2} />
            <span className="ml-[17px] text-[28px]">
              localhost<span className="text-[#5f6368]">:3000/ticker-detail/T</span>
            </span>
            <div className="ml-auto flex items-center gap-[32px]">
              <ZoomOut size={32} color="#5f6368" strokeWidth={2} />
              <svg width="30" height="30" viewBox="0 0 30 30">
                <rect x="2" y="2" width="26" height="26" rx="3" fill="none" stroke="#5f6368" strokeWidth="3" />
                <rect x="2" y="2" width="26" height="10" fill="#5f6368" />
              </svg>
              <Star size={32} color="#5f6368" strokeWidth={2} />
            </div>
          </div>
          <span className="ml-[29px] flex h-[33px] w-[33px] items-center justify-center rounded-full bg-[#5ac29a] text-[24px] text-white">
            G
          </span>
          <FaPuzzlePiece size={30} color="#202124" className="ml-[33px]" />
          <span className="ml-[27px] flex h-[44px] w-[44px] items-center justify-center rounded-full bg-[#4b2c9f] text-[22px] text-white">
            J
          </span>
          <EllipsisVertical size={36} color="#202124" strokeWidth={2.6} className="ml-[23px]" />
        </div>

        {/* bookmarks bar */}
        <div className="flex h-[66px] shrink-0 items-center border-b-2 border-[#aab5c8] bg-[#ccdbf5] pb-[4px] pl-[30px] text-[24px] tracking-[-0.1px] text-[#202124]">
          <AppsGrid />
          <span className="ml-[18px]">Apps</span>
          <div className="ml-[35px] flex items-center gap-[33px]">
            {bookmarks.map((b) => (
              <span
                key={b}
                className={
                  b.startsWith('HTTP')
                    ? 'flex items-center gap-[16px] tracking-[-0.5px] whitespace-nowrap'
                    : 'flex items-center gap-[16px] whitespace-nowrap'
                }
              >
                <Folder />
                {b}
              </span>
            ))}
          </div>
          <span className="ml-auto text-[26px]">»</span>
          <span className="ml-[20px] h-[40px] w-[2px] bg-[#a0a9b8]" />
          <span className="ml-[20px] flex items-center gap-[16px]">
            <Folder />
            Other Bookmarks
          </span>
          <span className="ml-[24px] h-[40px] w-[2px] bg-[#a0a9b8]" />
          <svg width="28" height="36" viewBox="0 0 28 36" className="ml-[22px]">
            <rect x="2" y="2" width="24" height="32" rx="2" fill="none" stroke="#202124" strokeWidth="3" />
            <path d="M7 11h3M13 11h8M7 18h3M13 18h8M7 25h3M13 25h8" stroke="#202124" strokeWidth="3" />
          </svg>
          <span className="mr-[28px] ml-[17px]">Reading List</span>
        </div>

        {/* navbar */}
        <nav className="flex h-[122px] shrink-0 items-center bg-[#212529] pr-[501px] pl-[500px]">
          <span className="text-[45px] font-semibold text-[#6fd0ae]">Bamboo</span>
          <div className="ml-[78px] flex gap-[61px] text-[29px] text-[#a0a3a5]">
            <span>Portfolio</span>
            <span>Watches</span>
            <span>Stockers</span>
            <span className="text-white">Account</span>
          </div>
          <div className="ml-auto flex items-center gap-[20px]">
            <div className="flex h-[69px] w-[383px] items-center rounded-[6px] border-2 border-[#ced4da] bg-black pl-[22px] text-[29px] text-white">
              T
            </div>
            <button className="h-[69px] w-[143px] rounded-[6px] border-2 border-white bg-[#1a1d20] text-[29px] text-white ring-[8px] ring-[#8b8d8f]">
              Search
            </button>
          </div>
          <button className="ml-[237px] h-[69px] w-[155px] rounded-[6px] border-2 border-[#dc3545] text-[29px] text-[#dc3545]">
            Log Out
          </button>
        </nav>

        {/* page */}
        <main className="flex-1 border-b-2 border-[#8d9498] bg-[#6c757d] px-[530px]">
          <svg width="34" height="30" viewBox="0 0 34 30" className="mt-[54px]">
            <path d="M2 1l30 28M32 1L2 29" stroke="#c6cacd" strokeWidth="3.5" fill="none" />
          </svg>
          <hr className="mt-[39px] border-t-2 border-[#5c636a]" />
          <div className="mx-[16px] mt-[45px]">
            <StockChart />
          </div>
          <div className="mt-[30px] ml-[207px] flex gap-[75.5px]">
            {intervals.map((t) => (
              <button key={t} className="h-[72px] w-[305px] rounded-[6px] border-2 border-white text-[29px] text-white">
                {t}
              </button>
            ))}
          </div>
          <hr className="mt-[47px] border-t-2 border-[#5c636a]" />
          <div className="mt-[43px] ml-[303px] flex gap-[212px]">
            {actions.map((t) => (
              <button key={t} className="h-[72px] w-[358.5px] rounded-[6px] border-2 border-[#ffc107] text-[29px] text-[#ffc107]">
                {t}
              </button>
            ))}
          </div>
        </main>
      </div>
    </div>
  )
}
